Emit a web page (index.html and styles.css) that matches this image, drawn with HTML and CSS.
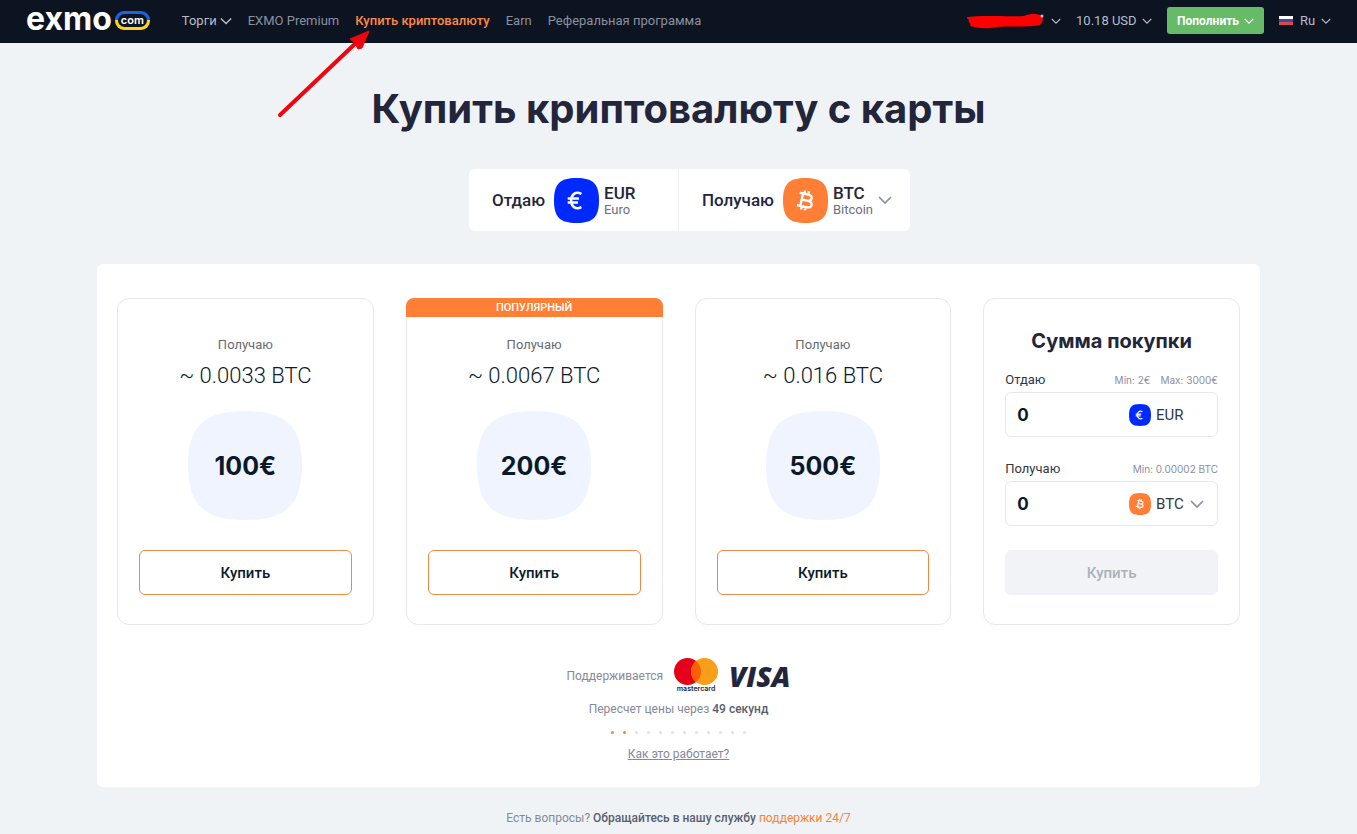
FILE: index.html
```html
<!DOCTYPE html>
<html lang="ru">

<head>
  <meta charset="UTF-8">
  <meta name="viewport" content="width=device-width, initial-scale=1.0">
  <title>EXMO - Купить криптовалюту</title>

  <link rel="stylesheet" href="styles.css">
</head>

<body>
  <svg class="sprite" aria-hidden="true">
    <symbol id="chevron" viewBox="0 0 14 8">
      <path d="M1 1l6 6 6-6" fill="none" stroke="currentColor" stroke-width="1.7" />
    </symbol>
    <symbol id="coin-eur" viewBox="0 0 46 46">
      <path d="M23 0C40 0 46 6 46 23S40 46 23 46 0 40 0 23 6 0 23 0z" fill="#0029ff" />
      <path d="M28 16.200c-6-3-10.500.8-10.500 6.800s4.500 9.800 10.500 6.800M14 21h11.500M14 25h10.500" fill="none" stroke="#fff" stroke-width="2.600" />
    </symbol>
    <symbol id="coin-btc" viewBox="0 0 46 46">
      <path d="M23 0C40 0 46 6 46 23S40 46 23 46 0 40 0 23 6 0 23 0z" fill="#ff7f37" />
      <g fill="none" stroke="#fff" stroke-width="2.400" transform="rotate(12 23 23)">
        <path d="M15.500 16.500h9c5.500 0 5.500 6.300 0 6.300h-5.500 6.500c6 0 6 6.700 0 6.700h-10M19 16.500v13M20.500 13v3.500M24.500 13v3.500M20.500 29.500v3.500M24.500 29.500v3.500" />
      </g>
    </symbol>
  </svg>

  <header class="header">
    <a class="logo" href="#" aria-label="exmo.com">
      <span class="logo-name">exmo</span>
      <span class="logo-zone"><span>com</span></span>
    </a>

    <nav class="nav">
      <button class="nav-item nav-menu" type="button">Торги <svg class="chevron"><use href="#chevron" /></svg></button>
      <a class="nav-item" href="#">EXMO Premium</a>
      <a class="nav-item active" href="#">Купить криптовалюту</a>
      <a class="nav-item" href="#">Earn</a>
      <a class="nav-item" href="#">Реферальная программа</a>
    </nav>

    <div class="account">
      <button class="account-user" type="button" aria-label="Профиль">
        <svg class="scribble" viewBox="0 0 80 18">
          <path d="M2 5c15-2 40 0 56-1 6-3 13-2 17-1 3 2 2 7-1 10-14 3-38 0-49 3-9 1-16-1-21-2 2-2-3-4-1-6-3-2-2-3-1-3z" fill="#f00" />
          <circle cx="76" cy="4" r="1.500" fill="#b9bdc9" />
        </svg>
        <svg class="chevron small"><use href="#chevron" /></svg>
      </button>
      <div class="dropdown">
        <select class="balance" aria-label="Баланс">
          <option>10.18 USD</option>
        </select>
        <svg class="chevron small"><use href="#chevron" /></svg>
      </div>
      <button class="deposit" type="button">Пополнить <svg class="chevron small"><use href="#chevron" /></svg></button>
      <div class="dropdown">
        <svg class="flag" viewBox="0 0 14 9">
          <path d="M0 0h14v3H0z" fill="#fff" />
          <path d="M0 3h14v3H0z" fill="#3c4aa5" />
          <path d="M0 6h14v3H0z" fill="#d6494f" />
        </svg>
        <select class="lang" aria-label="Язык">
          <option>Ru</option>
          <option>En</option>
        </select>
        <svg class="chevron small"><use href="#chevron" /></svg>
      </div>
    </div>
  </header>

  <svg class="arrow" viewBox="0 0 100 90" aria-hidden="true">
    <path d="M4 85L82 11" stroke="#f0050f" stroke-width="4" stroke-linecap="round" />
    <path d="M93 1L74 9l5 4 3 6 4 -1z" fill="#f0050f" stroke="#f0050f" stroke-linejoin="round" />
  </svg>

  <main class="main">
    <h1>Купить криптовалюту с карты</h1>

    <div class="pair-row">
      <div class="pair">
        <div class="pair-side">
          <span class="pair-label">Отдаю</span>
          <svg class="coin"><use href="#coin-eur" /></svg>
          <div class="pair-name">
            <strong>EUR</strong>
            <span>Euro</span>
          </div>
        </div>
        <div class="pair-side">
          <label class="pair-label" for="pair-get">Получаю</label>
          <svg class="coin"><use href="#coin-btc" /></svg>
          <div class="pair-name">
            <select id="pair-get">
              <option>BTC</option>
              <option>ETH</option>
            </select>
            <span>Bitcoin</span>
          </div>
          <svg class="chevron"><use href="#chevron" /></svg>
        </div>
      </div>
    </div>

    <section class="panel">
      <div class="cards">
        <article class="card">
          <p class="card-label">Получаю</p>
          <p class="card-amount">~ 0.0033 BTC</p>
          <div class="card-price">100€</div>
          <button class="buy" type="button">Купить</button>
        </article>

        <article class="card popular">
          <div class="badge">ПОПУЛЯРНЫЙ</div>
          <p class="card-label">Получаю</p>
          <p class="card-amount">~ 0.0067 BTC</p>
          <div class="card-price">200€</div>
          <button class="buy" type="button">Купить</button>
        </article>

        <article class="card">
          <p class="card-label">Получаю</p>
          <p class="card-amount">~ 0.016 BTC</p>
          <div class="card-price">500€</div>
          <button class="buy" type="button">Купить</button>
        </article>

        <form class="card order">
          <h2>Сумма покупки</h2>

          <div class="field-head">
            <label for="give">Отдаю</label>
            <span class="limits"><span>Min: 2€</span><span>Max: 3000€</span></span>
          </div>
          <div class="field">
            <input type="text" id="give" value="0">
            <div class="field-coin">
              <svg class="coin"><use href="#coin-eur" /></svg>
              <span>EUR</span>
            </div>
          </div>

          <div class="field-head">
            <label for="get">Получаю</label>
            <span class="limits"><span>Min: 0.00002 BTC</span></span>
          </div>
          <div class="field">
            <input type="text" id="get" value="0">
            <div class="field-coin">
              <svg class="coin"><use href="#coin-btc" /></svg>
              <select aria-label="Валюта">
                <option>BTC</option>
                <option>ETH</option>
              </select>
              <svg class="chevron"><use href="#chevron" /></svg>
            </div>
          </div>

          <button class="buy" type="submit" disabled>Купить</button>
        </form>
      </div>

      <div class="support">
        <span>Поддерживается</span>
        <div class="mastercard">
          <svg viewBox="0 0 44 27" aria-hidden="true">
            <circle cx="13.500" cy="13.500" r="13.500" fill="#e5001b" />
            <circle cx="30.500" cy="13.500" r="13.500" fill="#f79f1a" />
            <path d="M22 3a13.500 13.500 0 0 1 0 21 13.500 13.500 0 0 1 0-21z" fill="#ff5f00" />
          </svg>
          <span>mastercard</span>
        </div>
        <span class="visa">VISA</span>
      </div>
      <p class="timer">Пересчет цены через <b>49 секунд</b></p>
      <div class="dots">
        <i class="on"></i><i class="on"></i><i></i><i></i><i></i><i></i><i></i><i></i><i></i><i></i><i></i><i></i>
      </div>
      <a class="how" href="#">Как это работает?</a>
    </section>

    <p class="questions">Есть вопросы? <b>Обращайтесь в нашу службу</b> <a href="#">поддержки 24/7</a></p>
  </main>
</body>

</html>
```
FILE: styles.css
```css
* {
  box-sizing: border-box;
}

body {
  margin: 0;
  font-family: Roboto, sans-serif;
  font-size: 13px;
  color: #23263b;
  background-color: #f0f3f6;
}

h1,
h2,
p {
  margin: 0;
}

button,
input,
select {
  font-family: inherit;
  margin: 0;
}

select {
  appearance: none;
  padding: 0;
  border: none;
  background: none;
  color: inherit;
  cursor: pointer;
}

.sprite {
  display: none;
}

.chevron {
  flex: none;
  width: 14px;
  height: 8px;
}

.chevron.small {
  width: 10px;
  height: 6px;
}

/* header */

.header {
  display: flex;
  align-items: center;
  height: 43px;
  padding: 0 26px;
  padding-bottom: 2px;
  background-color: #0d1421;
  color: #b9bdc9;
}

.logo {
  display: flex;
  align-items: center;
  gap: 3px;
  margin-right: 32px;
  color: #fff;
  text-decoration: none;
}

.logo-name {
  font-family: Inter, sans-serif;
  font-size: 32px;
  font-weight: 700;
  line-height: 32px;
  margin-top: -4px;
}

.logo-zone {
  padding: 3px;
  border-radius: 9px;
  background: linear-gradient(#1f62e0 50%, #ffd21f 50%);
}

.logo-zone span {
  display: block;
  padding: 0 3px;
  border-radius: 7px;
  background-color: #0d1421;
  font-family: Inter, sans-serif;
  font-size: 11px;
  font-weight: 600;
  line-height: 13px;
}

.nav {
  display: flex;
  align-items: center;
  gap: 16px;
}

.nav-item {
  padding: 0;
  border: none;
  background: none;
  font-size: 13px;
  line-height: 20px;
  color: #8b90a0;
  text-decoration: none;
  white-space: nowrap;
  cursor: pointer;
}

.nav-item.active {
  color: #ff8a45;
  font-weight: 500;
}

.nav-menu {
  display: flex;
  align-items: center;
  gap: 3px;
  color: #b9bdc9;
}

.nav-menu .chevron {
  width: 12px;
}

.account {
  display: flex;
  align-items: center;
  gap: 15px;
  margin-left: auto;
}

.account-user {
  display: flex;
  align-items: center;
  gap: 5px;
  padding: 0;
  border: none;
  background: none;
  color: inherit;
}

.scribble {
  width: 80px;
  height: 18px;
}

.dropdown {
  display: flex;
  align-items: center;
  gap: 5px;
}

.dropdown select {
  font-size: 13px;
}

.flag {
  width: 14px;
  height: 9px;
  margin-right: 2px;
}

.deposit {
  display: flex;
  align-items: center;
  gap: 5px;
  height: 27px;
  padding: 0 10px;
  border: none;
  border-radius: 3px;
  background-color: #66bb66;
  color: #fff;
  font-size: 12px;
  font-weight: 700;
  cursor: pointer;
}

/* pointer over the active menu item */
.arrow {
  position: absolute;
  left: 276px;
  top: 30px;
  width: 100px;
  height: 90px;
}

/* page */

.main {
  padding: 0 97px;
}

h1 {
  padding: 36px 0 30px;
  font-family: Inter, sans-serif;
  font-size: 40px;
  font-weight: 700;
  line-height: 60px;
  text-align: center;
}

.pair-row {
  display: flex;
  justify-content: center;
  margin-bottom: 33px;
  padding-left: 22px;
}

.pair {
  display: flex;
  width: 441px;
  height: 62px;
  border-radius: 6px;
  background-color: #fff;
}

.pair-side {
  display: flex;
  align-items: center;
  gap: 5px;
  padding: 0 18px 0 23px;
}

.pair-side:first-child {
  flex: 1;
  border-right: 1px solid #f0f3f6;
}

.pair-label {
  margin-right: 4px;
  font-size: 17px;
  font-weight: 500;
}

.pair .coin {
  width: 45px;
  height: 45px;
}

.pair-name {
  display: flex;
  flex-direction: column;
  color: #6b6f80;
  line-height: 15px;
}

.pair-name strong,
.pair-name select {
  color: #23263b;
  font-size: 17px;
  font-weight: 500;
  line-height: 18px;
}

.pair .chevron {
  color: #8b90a0;
}

.panel {
  display: flex;
  flex-direction: column;
  align-items: center;
  padding: 34px 20px 23px;
  border-radius: 6px;
  background-color: #fff;
  color: #85899a;
  font-size: 12px;
}

.cards {
  display: grid;
  grid-template-columns: repeat(4, minmax(0, 1fr));
  gap: 32px;
  width: 100%;
}

.card {
  position: relative;
  display: flex;
  flex-direction: column;
  align-items: center;
  padding: 36px 21px 29px;
  border: 1px solid #e6e8ec;
  border-radius: 12px;
  color: #0b1a2b;
}

.badge {
  position: absolute;
  top: -1px;
  left: -1px;
  right: -1px;
  border-radius: 8px 8px 0 0;
  background-color: #ff7f37;
  color: #fff;
  font-size: 11px;
  font-weight: 500;
  line-height: 19px;
  text-align: center;
}

.popular {
  border-top-left-radius: 8px;
  border-top-right-radius: 8px;
}

.card-label {
  color: #666a75;
  font-size: 13px;
  line-height: 20px;
}

.card-amount {
  margin: 7px 0 21px;
  font-size: 22px;
  font-weight: 300;
  line-height: 28px;
}

.card-price {
  display: flex;
  justify-content: center;
  align-items: center;
  width: 114px;
  height: 109px;
  margin-bottom: 30px;
  background: url("data:image/svg+xml,%3Csvg xmlns='http://www.w3.org/2000/svg' viewBox='0 0 100 100' preserveAspectRatio='none'%3E%3Cpath d='M50 0C86 0 100 14 100 50S86 100 50 100 0 86 0 50 14 0 50 0z' fill='%23f0f4ff'/%3E%3C/svg%3E") center / 100% 100%;
  font-family: Inter, sans-serif;
  font-size: 25px;
  font-weight: 700;
}

.buy {
  width: 100%;
  height: 45px;
  border: 1px solid #ea8a48;
  border-radius: 6px;
  background-color: #fff;
  color: #0b1a2b;
  font-size: 15px;
  font-weight: 500;
  cursor: pointer;
}

.buy:disabled {
  border-color: #f2f3f6;
  background-color: #f2f3f6;
  color: #a9b2ba;
  cursor: default;
}

/* order form */

.order {
  align-items: stretch;
  padding-top: 27px;
}

h2 {
  margin-bottom: 14px;
  color: #23263b;
  font-family: Inter, sans-serif;
  font-size: 20px;
  font-weight: 700;
  line-height: 30px;
  text-align: center;
}

.field-head {
  display: flex;
  justify-content: space-between;
  align-items: center;
  margin-bottom: 2px;
  color: #33363f;
  font-size: 13px;
  line-height: 20px;
}

.limits {
  display: flex;
  gap: 10px;
  color: #8b8f9e;
  font-family: Inter, sans-serif;
  font-size: 10px;
}

.field {
  display: flex;
  align-items: center;
  height: 45px;
  margin-bottom: 22px;
  border: 1px solid #e6e8ec;
  border-radius: 6px;
}

.field input {
  flex: 1;
  min-width: 0;
  padding: 0 0 0 11px;
  border: none;
  background: none;
  color: #0b1a2b;
  font-family: Inter, sans-serif;
  font-size: 17px;
  font-weight: 700;
}

.field-coin {
  display: flex;
  align-items: center;
  gap: 5px;
  width: 88px;
  color: #33363f;
  font-size: 15px;
}

.field-coin select {
  font-size: 15px;
}

.field-coin .coin {
  width: 22px;
  height: 22px;
}

.field-coin .chevron {
  color: #8b90a0;
}

.order .buy {
  margin-top: 2px;
}

/* payment info */

.support {
  display: flex;
  align-items: center;
  gap: 11px;
  margin: 33px 0 7px;
}

.mastercard {
  display: flex;
  flex-direction: column;
  align-items: center;
  color: #23263b;
  font-family: Inter, sans-serif;
  font-size: 7px;
  font-weight: 600;
  line-height: 8px;
}

.mastercard svg {
  width: 44px;
  height: 27px;
}

.visa {
  color: #23263b;
  font-family: "Open Sans", sans-serif;
  font-size: 28px;
  font-style: italic;
  font-weight: 800;
  line-height: 28px;
}

.timer {
  line-height: 18px;
}

.timer b {
  color: #5a5e70;
  font-weight: 500;
}

.dots {
  display: flex;
  gap: 9px;
  margin: 13px 0 10px;
}

.dots i {
  width: 3px;
  height: 3px;
  border-radius: 50%;
  background-color: #dfe1e6;
}

.dots .on {
  background-color: #ea8a48;
}

.how {
  color: inherit;
  line-height: 20px;
}

.questions {
  padding: 22px 0 8px;
  color: #85899a;
  font-size: 12px;
  line-height: 18px;
  text-align: center;
}

.questions b {
  color: #5a5e70;
  font-weight: 500;
}

.questions a {
  color: #ff7f37;
  text-decoration: none;
}
```
